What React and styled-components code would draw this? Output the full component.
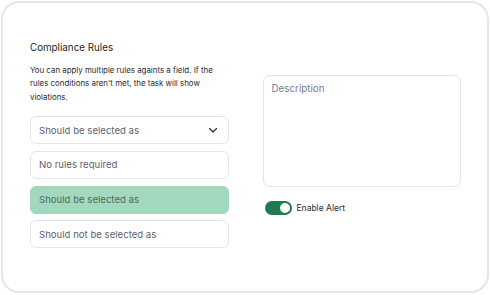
import React from 'react'
import styled, { createGlobalStyle } from 'styled-components'

const GlobalStyle = createGlobalStyle`
  html, body { margin: 0; padding: 0; background: #fff; }
  body { font-family: Inter, "Noto Sans", sans-serif; }
`

const Card = styled.div`
  box-sizing: border-box;
  margin: 1px 0 0 1px;
  width: 488px;
  height: 292px;
  border: 2px solid #e6e6e6;
  border-radius: 18px;
  background: #fff;
  display: flex;
  align-items: center;
  gap: 34px;
  padding: 0 26px 5px 27px;
`

const Column = styled.div`
  width: 199px;
  display: flex;
  flex-direction: column;
`

const Title = styled.div`
  font-size: 9.8px;
  color: #1f1f24;
  line-height: 14px;
  margin-bottom: 9px;
`

const Help = styled.p`
  margin: 0 0 12px;
  max-width: 192px;
  font-size: 7.9px;
  line-height: 13.5px;
  color: #2a2a30;
`

const List = styled.div`
  display: flex;
  flex-direction: column;
  gap: 6.7px;
`

const Option = styled.div`
  box-sizing: border-box;
  height: 28px;
  display: flex;
  align-items: center;
  justify-content: space-between;
  padding: 0 9px 0 8px;
  border-radius: 6px;
  border: 1px solid ${p => (p.$active ? '#9fd6bd' : '#e4e4e8')};
  background: ${p => (p.$active ? '#a2d8be' : '#fff')};
  color: ${p => (p.$active ? '#4b6a5f' : '#5e5f70')};
  font-size: 9.6px;
`

const Chevron = () => (
  <svg width="12" height="12" viewBox="0 0 24 24" fill="none" stroke="#2b2b30" strokeWidth="2.4" strokeLinecap="round" strokeLinejoin="round">
    <path d="M5 9l7 7 7-7" />
  </svg>
)

const Textarea = styled.div`
  box-sizing: border-box;
  height: 112px;
  border: 1px solid #e4e4e8;
  border-radius: 7px;
  padding: 7px 8px;
  font-size: 9.8px;
  color: #7a7b88;
`

const ToggleRow = styled.div`
  display: flex;
  align-items: center;
  gap: 5px;
  margin: 14px 0 0 2px;
  font-size: 8.5px;
  color: #2a2a30;
`

const Switch = styled.div`
  box-sizing: border-box;
  width: 27px;
  height: 14px;
  border-radius: 7px;
  background: #1e7a50;
  padding: 2px;
  display: flex;
  justify-content: flex-end;
`

const Knob = styled.div`
  width: 10px;
  height: 10px;
  border-radius: 50%;
  background: #fff;
`

export default function App() {
  return (
    <>
      <GlobalStyle />
      <Card>
        <Column>
          <Title>Compliance Rules</Title>
          <Help>
            You can apply multiple rules againts a field. If the rules conditions aren't met, the task will show violations.
          </Help>
          <List>
            <Option>
              Should be selected as
              <Chevron />
            </Option>
            <Option>No rules required</Option>
            <Option $active>Should be selected as</Option>
            <Option>Should not be selected as</Option>
          </List>
        </Column>
        <Column>
          <Textarea>Description</Textarea>
          <ToggleRow>
            <Switch><Knob /></Switch>
            Enable Alert
          </ToggleRow>
        </Column>
      </Card>
    </>
  )
}
